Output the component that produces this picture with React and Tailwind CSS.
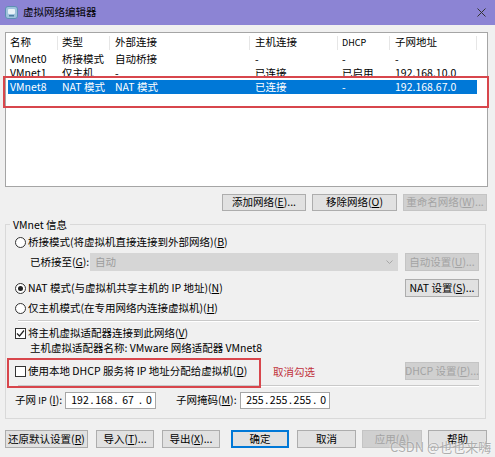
import React from "react";

function Btn({ children, className = "", disabled, primary }) {
  let cls =
    "flex items-center justify-center border leading-none whitespace-nowrap ";
  if (disabled) cls += "bg-[#d0d0d0] border-[#c4c4c4] text-[#a3a3a3] ";
  else if (primary)
    cls += "bg-[#e1e1e1] border-[#0078d7] shadow-[inset_0_0_0_1px_#0078d7] text-black ";
  else cls += "bg-[#e1e1e1] border-[#adadad] text-black ";
  return <div className={cls + className}>{children}</div>;
}

function Radio({ checked }) {
  return (
    <div className="w-[11px] h-[11px] rounded-full border border-[#333] bg-white flex items-center justify-center shrink-0">
      {checked && <div className="w-[5px] h-[5px] rounded-full bg-[#222]" />}
    </div>
  );
}

function Check({ checked }) {
  return (
    <div className="w-[11px] h-[11px] border border-[#333] bg-white flex items-center justify-center shrink-0">
      {checked && (
        <svg width="9" height="9" viewBox="0 0 9 9">
          <path d="M1 4.5 L3.5 7 L8 1.5" fill="none" stroke="#222" strokeWidth="1.2" />
        </svg>
      )}
    </div>
  );
}

function Sep() {
  return (
    <div className="h-[2px] ml-[3px] border-t border-[#c9c9c9] border-b border-b-white" />
  );
}

function IpBox({ parts, className }) {
  return (
    <div
      className={
        "h-[17px] bg-white border border-[#a6a6a6] flex items-center pl-[4px] text-[10.5px] leading-none " +
        className
      }
    >
      <span className="w-[20px] text-center">{parts[0]}</span>
      <span className="w-[4px] text-center">.</span>
      <span className="w-[20px] text-center">{parts[1]}</span>
      <span className="w-[4px] text-center">.</span>
      <span className="w-[20px] text-center">{parts[2]}</span>
      <span className="w-[5px] text-center">.</span>
      <span className="w-[12px] text-center">{parts[3]}</span>
    </div>
  );
}

const rows = [
  ["VMnet0", "桥接模式", "自动桥接", "-", "-", "-"],
  ["VMnet1", "仅主机", "-", "已连接", "已启用", "192.168.10.0"],
  ["VMnet8", "NAT 模式", "NAT 模式", "已连接", "-", "192.168.67.0"],
];

function Row({ cells, selected, header }) {
  const base = header
    ? "h-[19px] flex items-center"
    : "w-[469px] h-[14px] flex items-center " + (selected ? "bg-[#0078d7] text-white" : "text-black");
  const sep = header ? "border-r border-[#e6e6e6] h-[14px]" : "h-full";
  return (
    <div className={base}>
      <div className={"w-[50px] pl-[2px] flex items-center " + sep}>{cells[0]}</div>
      <div className={"w-[52px] pl-[4px] flex items-center " + sep}>{cells[1]}</div>
      <div className={"w-[140px] pl-[5px] flex items-center " + sep}>{cells[2]}</div>
      <div className={"w-[88px] pl-[5px] flex items-center " + sep}>{cells[3]}</div>
      <div className={"w-[52px] pl-[4px] flex items-center " + sep}>{cells[4]}</div>
      <div className={"w-[87px] pl-[5px] flex items-center " + sep}>{cells[5]}</div>
    </div>
  );
}

export default function App() {
  return (
    <div className="w-[495px] h-[457px] bg-[#f0f0f0] relative overflow-hidden [font-family:'Noto_Sans_CJK_SC','Noto_Sans',sans-serif] text-[10.5px] leading-none text-black">
      {/* title bar */}
      <div className="h-[25px] bg-[#8c84d4] flex items-center pl-[5px] pr-[9px]">
        <svg width="13" height="13" viewBox="0 0 13 13">
          <rect x="0.5" y="0.5" width="12" height="12" rx="2.5" fill="#9fc3dc" stroke="#5d8fb3" />
          <rect x="3" y="3" width="7" height="5" rx="1" fill="#e8f2f8" />
          <rect x="4" y="9" width="5" height="1.5" fill="#4e7ea3" />
        </svg>
        <span className="ml-[5px] text-[10.5px] text-black">虚拟网络编辑器</span>
        <svg className="ml-auto" width="9" height="9" viewBox="0 0 9 9">
          <path d="M0.5 0.5 L8.5 8.5 M8.5 0.5 L0.5 8.5" stroke="#333" strokeWidth="1" />
        </svg>
      </div>

      {/* list */}
      <div className="mt-[7px] ml-[5px] w-[483px] h-[155px] bg-white border border-[#a5a5a5] pl-[2px]">
        <Row header cells={["名称", "类型", "外部连接", "主机连接", <span className="text-[9px]">DHCP</span>, "子网地址"]} />
        {rows.map((r, i) => (
          <Row key={i} cells={r} selected={i === 2} />
        ))}
      </div>

      {/* buttons under list */}
      <div className="mt-[7px] flex justify-end pr-[8px] gap-[6px]">
        <Btn className="w-[84px] h-[17px]">添加网络(<u>E</u>)...</Btn>
        <Btn className="w-[85px] h-[17px]">移除网络(<u>O</u>)</Btn>
        <Btn disabled className="w-[84px] h-[17px]">重命名网络(<u>W</u>)...</Btn>
      </div>

      {/* group */}
      <div className="relative mt-[13px] ml-[5px] w-[481px] h-[195px] border border-[#d9d9d9] pl-[9px] pr-[6px]">
        <span className="absolute left-[4px] top-[-7px] bg-[#f0f0f0] px-[3px] leading-[13px]">VMnet 信息</span>

        <div className="mt-[9px] h-[16px] flex items-center gap-[2px]">
          <Radio />
          <span>桥接模式(将虚拟机直接连接到外部网络)(<u>B</u>)</span>
        </div>

        <div className="mt-[3px] h-[18px] flex items-center">
          <span className="ml-[15px] w-[60px]">已桥接至(<u>G</u>):</span>
          <div className="w-[308px] h-[18px] bg-[#d6d6d6] flex items-center pl-[5px] text-[#9c9c9c]">
            自动
            <svg className="ml-auto mr-[5px]" width="7" height="5" viewBox="0 0 7 5">
              <path d="M0.5 0.5 L3.5 3.5 L6.5 0.5" fill="none" stroke="#a6a6a6" />
            </svg>
          </div>
          <Btn disabled className="ml-auto w-[74px] h-[18px]">自动设置(<u>U</u>)...</Btn>
        </div>

        <div className="mt-[8px] h-[18px] flex items-center gap-[2px]">
          <Radio checked />
          <span>NAT 模式(与虚拟机共享主机的 IP 地址)(<u>N</u>)</span>
          <Btn className="ml-auto w-[74px] h-[18px]">NAT 设置(<u>S</u>)...</Btn>
        </div>

        <div className="mt-[3px] h-[16px] flex items-center gap-[2px]">
          <Radio />
          <span>仅主机模式(在专用网络内连接虚拟机)(<u>H</u>)</span>
        </div>

        <div className="mt-[4px]">
          <Sep />
        </div>

        <div className="mt-[3px] h-[16px] flex items-center gap-[2px]">
          <Check checked />
          <span>将主机虚拟适配器连接到此网络(<u>V</u>)</span>
        </div>

        <div className="h-[14px] flex items-center pl-[15px]">
          主机虚拟适配器名称: VMware 网络适配器 VMnet8
        </div>

        <div className="mt-[7px] h-[18px] flex items-center">
          <div className="w-[258px] flex items-center gap-[2px]">
            <Check />
            <span>使用本地 DHCP 服务将 IP 地址分配给虚拟机(<u>D</u>)</span>
          </div>
          <span className="mt-[3px] text-[#c0303c]">取消勾选</span>
          <Btn disabled className="ml-auto w-[74px] h-[18px]">DHCP 设置(<u>P</u>)...</Btn>
        </div>

        <div className="mt-[5px]">
          <Sep />
        </div>

        <div className="mt-[5px] h-[17px] flex items-center">
          <span className="w-[50px]">子网 <span className="text-[9px]">IP</span> (<u>I</u>):</span>
          <IpBox className="w-[91px]" parts={["192", "168", "67", "0"]} />
          <span className="ml-[20px] w-[64px]">子网掩码(<u>M</u>):</span>
          <IpBox className="w-[90px]" parts={["255", "255", "255", "0"]} />
        </div>
      </div>

      {/* bottom buttons */}
      <div className="mt-[11px] ml-[5px] flex items-center">
        <Btn className="w-[83px] h-[18px]">还原默认设置(<u>R</u>)</Btn>
        <Btn className="ml-[8px] w-[58px] h-[18px]">导入(<u>T</u>)...</Btn>
        <Btn className="ml-[8px] w-[58px] h-[18px]">导出(<u>X</u>)...</Btn>
        <Btn primary className="ml-[11px] w-[58px] h-[18px]">确定</Btn>
        <Btn className="ml-[8px] w-[59px] h-[18px]">取消</Btn>
        <Btn disabled className="ml-[6px] w-[60px] h-[18px]">应用(<u>A</u>)</Btn>
        <Btn className="ml-[6px] w-[59px] h-[18px]">帮助</Btn>
      </div>

      {/* annotations */}
      <div className="absolute left-[3px] top-[76px] w-[486px] h-[32px] border-2 border-[#d8464c]" />
      <div className="absolute left-[7px] top-[358px] w-[254px] h-[30px] border-2 border-[#d8464c]" />
      <div className="absolute left-[390px] top-[439px] text-[13px] leading-[16px] text-[rgba(150,150,150,0.75)] [text-shadow:0_0_2px_rgba(255,255,255,0.9)] whitespace-nowrap">
        CSDN @也也来嗨
      </div>
    </div>
  );
}
